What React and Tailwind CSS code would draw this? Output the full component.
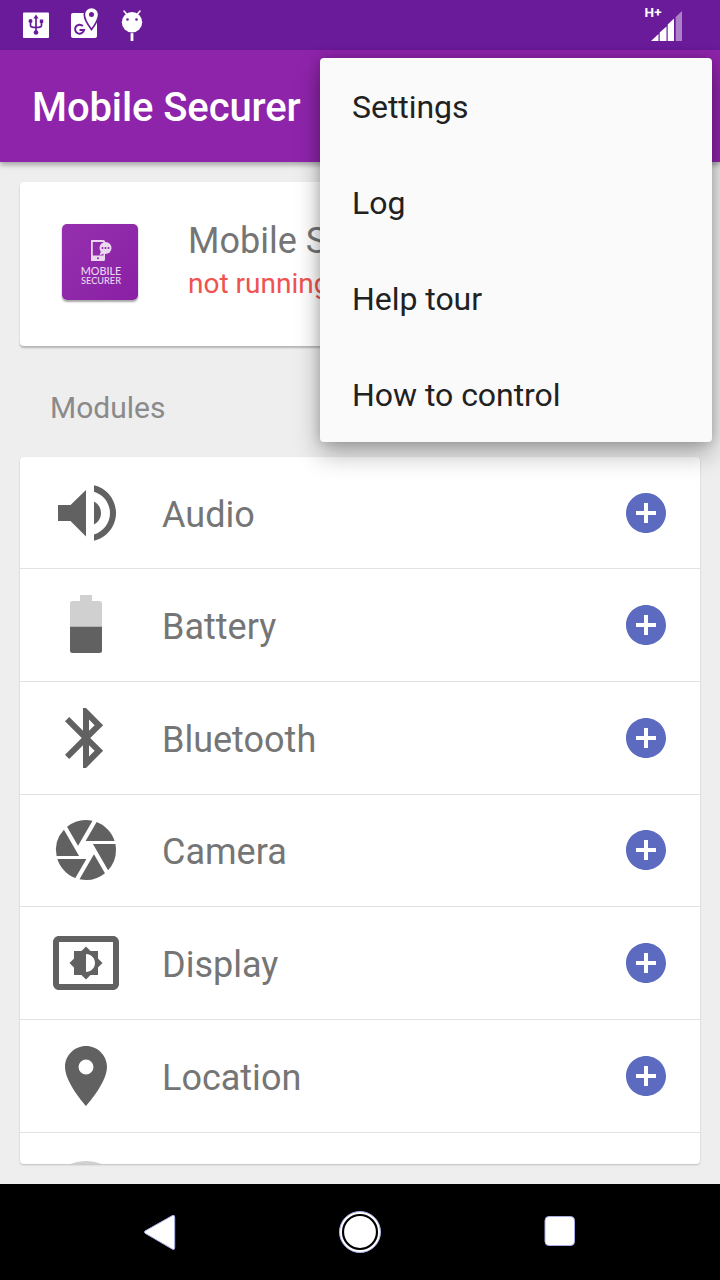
import React from "react";
import { MdAddCircle, MdCamera, MdLocationOn, MdSettingsBrightness } from "react-icons/md";

function AudioIcon() {
  return (
    <svg className="size-[72px]" viewBox="0 0 72 72" fill="currentColor">
      <path d="M8 28V44H20.500L36 59.500V13L20.500 28Z" />
      <path d="M44 24.500C48.200 26.600 51 31 51 36S48.200 45.400 44 47.500Z" />
      <path d="M44 8.300C56.700 11.200 66 22.600 66 36S56.700 60.800 44 63.700V57.500C53.300 54.700 60 46 60 36S53.300 17.500 44 14.700Z" />
    </svg>
  );
}

function BatteryIcon() {
  return (
    <svg className="size-[72px]" viewBox="0 0 72 72">
      <path fill="#d0d0d0" d="M30 6H42V12H49.500Q52 12 52 14.500V38H20V14.500Q20 12 22.500 12H30Z" />
      <path fill="#616161" d="M20 37.800H52V61.500Q52 64 49.500 64H22.500Q20 64 20 61.500Z" />
    </svg>
  );
}

function BluetoothIcon() {
  return (
    <svg className="size-[72px]" viewBox="0 0 24 24" fill="currentColor">
      <path d="M17.710 7.710L12 2h-1v7.590L6.410 5 5 6.410 10.590 12 5 17.590 6.410 19 11 14.410V22h1l5.710-5.710-4.300-4.290 4.300-4.290zM13 5.830l1.880 1.880L13 9.590V5.830zm1.880 10.460L13 18.170v-3.760l1.880 1.880z" />
    </svg>
  );
}

const modules = [
  { name: "Audio", icon: <AudioIcon /> },
  { name: "Battery", icon: <BatteryIcon /> },
  { name: "Bluetooth", icon: <BluetoothIcon /> },
  { name: "Camera", icon: <MdCamera className="size-[72px]" /> },
  { name: "Display", icon: <MdSettingsBrightness className="size-[72px]" /> },
  { name: "Location", icon: <MdLocationOn className="size-[72px]" /> },
];

function StatusBar() {
  return (
    <div className="flex h-[50px] shrink-0 items-start justify-between bg-[#6a1b9a] pl-[22px] pr-[37px]">
      <div className="flex gap-[20px] pt-[5px]">
        <svg className="h-[40px] w-[28px]" viewBox="0 0 28 40">
          <rect x="1" y="7.500" width="26" height="25.500" rx="1" fill="#fff" />
          <g fill="none" stroke="#6a1b9a" strokeWidth="1.700">
            <path d="M14 12V28M8.500 16V20.500Q8.500 22.500 14 22.500Q19.500 22.500 19.500 20.500V16" />
          </g>
          <path fill="#6a1b9a" d="M14 9.500L16.600 13.500H11.400ZM17.800 14.500H21.200V18H17.800Z" />
          <circle cx="8.500" cy="16" r="2" fill="#6a1b9a" />
          <circle cx="14" cy="27.500" r="2.300" fill="#6a1b9a" />
        </svg>
        <svg className="h-[40px] w-[30px]" viewBox="0 0 30 40">
          <rect x="1" y="8" width="26" height="25" rx="2" fill="#fff" />
          <path fill="none" stroke="#6a1b9a" strokeWidth="2" d="M12.800 21A4.500 4.500 0 1 0 14 25H9.500" />
          <path fill="#fff" stroke="#6a1b9a" strokeWidth="1.700" d="M21.500 2.300A7.200 7.200 0 0 0 14.300 9.500C14.300 15 21.500 24.500 21.500 24.500S28.700 15 28.700 9.500A7.200 7.200 0 0 0 21.500 2.300Z" />
          <circle cx="21.500" cy="9.600" r="2.500" fill="#6a1b9a" />
        </svg>
        <svg className="h-[40px] w-[24px]" viewBox="-2 0 24 40">
          <circle cx="10" cy="17.300" r="10.200" fill="#fff" />
          <path stroke="#fff" strokeWidth="1.600" strokeLinecap="round" d="M4.500 9L2 6M15.500 9L18 6" />
          <path fill="#fff" d="M8.600 28.200H11.400V36H8.600Z" />
          <circle cx="5.500" cy="14.500" r="1.300" fill="#6a1b9a" />
          <circle cx="14.500" cy="14.500" r="1.300" fill="#6a1b9a" />
        </svg>
      </div>
      <div className="flex pt-[5px]">
        <span className="-mr-[11px] text-[13.500px] font-bold leading-[14px] tracking-[0.300px] text-white">H+</span>
        <svg className="h-[40px] w-[32px]" viewBox="0 0 32 40" fill="#fff">
          <path d="M0 36L7.500 29V36ZM8.700 27.500L15.500 21.500V36H8.700ZM16.700 19.500L23 13.500V36H16.700Z" />
          <path fillOpacity="0.450" d="M24.700 12L31 6V36H24.700Z" />
        </svg>
      </div>
    </div>
  );
}

function AppLogo() {
  return (
    <div className="flex size-[76px] flex-col items-center rounded-[5px] bg-linear-to-br from-[#9530ae] to-[#8a1fa5] pt-[15px] text-[#ead8ef] shadow-[0_1.500px_2px_rgba(0,0,0,0.350)]">
      <svg className="h-[23px] w-[24px]" viewBox="0 0 24 23">
        <path fill="currentColor" fillRule="evenodd" d="M3.500 1H15.500Q17 1 17 2.500V20.500Q17 22 15.500 22H3.500Q3 22 3 21.500V1.500ZM4.800 3V16.500H15.500V3Z" />
        <circle cx="17.500" cy="9" r="6" fill="currentColor" />
        <path fill="currentColor" d="M13 12L11.500 16.500L17 14Z" />
        <path stroke="#8e24aa" strokeWidth="2" strokeLinecap="round" strokeDasharray="0 3" d="M14.500 9H21" />
        <circle cx="10" cy="19.300" r="1" fill="#8e24aa" />
      </svg>
      <span className="ml-[2px] mt-[4px] font-['Lato'] text-[10.800px] font-medium leading-[10px]">MOBILE</span>
      <span className="ml-[2px] font-['Lato'] text-[9.200px] font-medium leading-[9px]">SECURER</span>
    </div>
  );
}

function OverflowMenu() {
  return (
    <div className="absolute left-[320px] top-[58px] flex h-[384px] w-[392px] flex-col rounded-[4px] bg-[#fafafa] text-[32px] tracking-[-0.040px] text-[#212121] shadow-[0_12px_26px_rgba(0,0,0,0.300),0_0_12px_rgba(0,0,0,0.180)]">
      {["Settings", "Log", "Help tour", "How to control"].map((label) => (
        <div key={label} className="flex h-[96px] items-center px-[32px] pt-px">{label}</div>
      ))}
    </div>
  );
}

function ModuleRow({ icon, name }) {
  return (
    <div className="flex h-[112.700px] shrink-0 items-center border-b border-[#e2e2e2] pl-[30px] pr-[30px] first:h-[112.200px]">
      <span className="flex w-[112px] text-[#616161]">{icon}</span>
      <span className="grow pt-[4px] text-[36px] text-[#757575]">{name}</span>
      <MdAddCircle className="size-[48px] text-[#5c6bc0]" />
    </div>
  );
}

export default function App() {
  return (
    <div className="relative flex h-[1280px] w-[720px] flex-col overflow-hidden bg-[#eeeeee] font-['Roboto',sans-serif]">
      <StatusBar />
      <header className="flex h-[112px] shrink-0 items-center bg-[#8e24aa] pl-[32px] pt-[4px] text-[40px] font-medium tracking-[-0.100px] text-white shadow-[0_3px_5px_rgba(0,0,0,0.300)]">
        Mobile Securer
      </header>
      <main className="flex h-[1022px] flex-col px-[20px] pt-[20px]">
        <section className="flex h-[164px] shrink-0 rounded-[4px] bg-white pl-[42px] pt-[42px] shadow-[0_2px_2px_rgba(0,0,0,0.240)]">
          <AppLogo />
          <div className="ml-[50px] flex flex-col">
            <span className="-mt-[4px] text-[36px] leading-[42px] text-[#757575]">Mobile Securer</span>
            <span className="mt-[5px] text-[28px] leading-[34px] text-[#ef5350]">not running</span>
          </div>
        </section>
        <h2 className="flex h-[111px] shrink-0 items-center pl-[30px] pt-[11px] text-[30px] text-[#8a8a8a]">Modules</h2>
        <section className="flex h-[707px] shrink-0 flex-col overflow-hidden rounded-[4px] bg-white shadow-[0_1px_2px_rgba(0,0,0,0.200)]">
          {modules.map((module) => (
            <ModuleRow key={module.name} icon={module.icon} name={module.name} />
          ))}
          <div className="flex shrink-0 pl-[30px] pt-[26px]">
            <svg className="size-[72px]" viewBox="0 0 72 72" fill="#d0d0d0">
              <path d="M36 2Q52 2 68 14L36 56L4 14Q20 2 36 2Z" />
            </svg>
          </div>
        </section>
      </main>
      <nav className="flex h-[96px] shrink-0 bg-black">
        <svg className="h-[96px] w-[720px]" viewBox="0 0 720 96" fill="#fff" stroke="#a9aee8" strokeWidth="1">
          <path strokeLinejoin="round" d="M145 47Q144 48 145 49.200L172.500 65.200Q174.700 66 174.700 64V33Q174.700 30.700 172.500 31.500Z" />
          <circle cx="360" cy="48" r="20.500" />
          <circle cx="360" cy="48" r="17" stroke="#000" strokeWidth="2.200" />
          <rect x="545" y="32.500" width="29.500" height="29" rx="4" />
        </svg>
      </nav>
      <OverflowMenu />
    </div>
  );
}
